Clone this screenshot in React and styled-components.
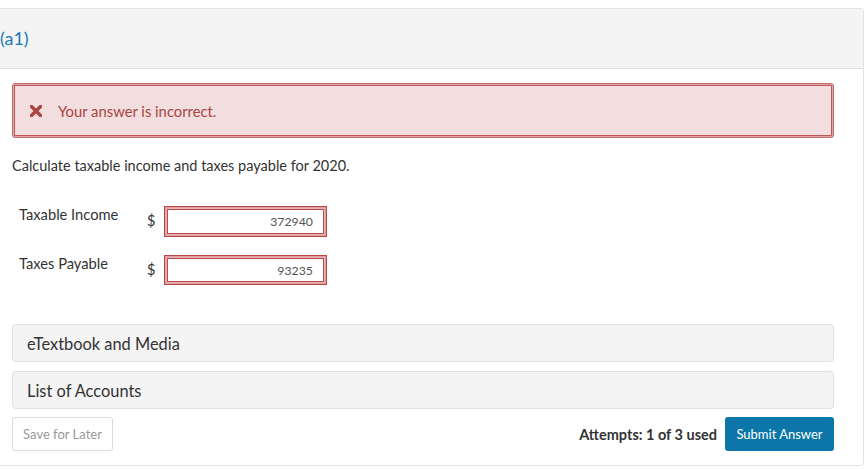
import React from "react";
import styled, { createGlobalStyle } from "styled-components";

const Global = createGlobalStyle`
  html, body { margin: 0; padding: 0; background: #fff; }
  body { font-family: Lato, "Open Sans", Arial, sans-serif; color: #333; }
  * { box-sizing: border-box; }
`;

const Page = styled.div`
  padding-top: 8px;
  width: 868px;
  height: 469px;
  overflow: hidden;
`;

const Card = styled.div`
  margin-left: -1px;
  width: 865px;
  border: 1px solid #e3e3e3;
  border-radius: 0 3px 3px 0;
  background: #fff;
`;

const Header = styled.div`
  height: 60px;
  background: #f4f4f4;
  border-bottom: 1px solid #dedede;
  display: flex;
  align-items: center;
  padding-left: 0;
  padding-bottom: 1px;
  font-size: 18px;
  color: #1a7ab5;
`;

const Body = styled.div`
  padding: 14px 29px 14px 12px;
`;

const Alert = styled.div`
  height: 55px;
  border: 1px solid #c46a6a;
  border-radius: 3px;
  box-shadow: inset 0 0 0 1px #e3a7a7, inset 0 0 0 2px #bb5656;
  background: #f2dede;
  color: #a94442;
  display: flex;
  align-items: center;
  padding-left: 17px;
  font-size: 14.8px;
  gap: 16px;
`;

const Instruction = styled.p`
  margin: 18px 0 0;
  font-size: 14.5px;
  line-height: 20px;
  color: #333;
`;

const Fields = styled.div`
  margin-top: 30px;
  display: flex;
  flex-direction: column;
  gap: 19px;
`;

const FieldRow = styled.div`
  display: flex;
  align-items: flex-start;
  height: 30px;
`;

const FieldLabel = styled.div`
  width: 135px;
  padding-left: 7px;
  padding-top: 1px;
  font-size: 14.7px;
  line-height: 14px;
  color: #333;
`;

const Dollar = styled.span`
  width: 17px;
  font-size: 14.5px;
  line-height: 30px;
  color: #333;
`;

const Input = styled.div`
  width: 163px;
  height: ${(p) => p.$h}px;
  border: 1px solid #b84848;
  box-shadow: inset 0 0 0 1px #dca0a0, inset 0 0 0 2px #e6b3b3, inset 0 0 0 3px #b94c4c;
  background: #fff;
  display: flex;
  align-items: center;
  justify-content: flex-end;
  padding-right: 13px;
  font-size: 12.3px;
  color: #555;
`;

const Panels = styled.div`
  margin-top: 39px;
  display: flex;
  flex-direction: column;
  gap: 9px;
`;

const Panel = styled.div`
  height: 38px;
  background: #f4f4f4;
  border: 1px solid #e0e0e0;
  border-radius: 4px;
  display: flex;
  align-items: center;
  padding-left: 14px;
  font-size: 16.4px;
  color: #333;
`;

const Footer = styled.div`
  margin-top: 8px;
  display: flex;
  align-items: center;
  justify-content: space-between;
`;

const GhostButton = styled.button`
  width: 101px;
  height: 34px;
  border: 1px solid #dcdcdc;
  border-radius: 3px;
  background: #fff;
  font-family: inherit;
  font-size: 13px;
  color: #999;
  cursor: pointer;
`;

const Right = styled.div`
  display: flex;
  align-items: center;
  gap: 8px;
`;

const Attempts = styled.span`
  font-size: 14.5px;
  font-weight: 700;
  color: #333;
`;

const Submit = styled.button`
  width: 109px;
  height: 34px;
  border: none;
  border-radius: 3px;
  background: #0b76a7;
  color: #fff;
  font-family: inherit;
  font-size: 13px;
  cursor: pointer;
`;

const XIcon = () => (
  <svg width="12" height="12" viewBox="0 0 12 12" aria-hidden="true">
    <path d="M1.5 1.5 L10.5 10.5 M10.5 1.5 L1.5 10.5" stroke="#a94442" strokeWidth="3.4" strokeLinecap="square" />
  </svg>
);

export default function App() {
  return (
    <Page>
      <Global />
      <Card>
        <Header>(a1)</Header>
        <Body>
          <Alert>
            <XIcon />
            <span>Your answer is incorrect.</span>
          </Alert>
          <Instruction>Calculate taxable income and taxes payable for 2020.</Instruction>
          <Fields>
            <FieldRow>
              <FieldLabel>Taxable Income</FieldLabel>
              <Dollar>$</Dollar>
              <Input $h={31}>372940</Input>
            </FieldRow>
            <FieldRow>
              <FieldLabel>Taxes Payable</FieldLabel>
              <Dollar>$</Dollar>
              <Input $h={30}>93235</Input>
            </FieldRow>
          </Fields>
          <Panels>
            <Panel>eTextbook and Media</Panel>
            <Panel>List of Accounts</Panel>
          </Panels>
          <Footer>
            <GhostButton>Save for Later</GhostButton>
            <Right>
              <Attempts>Attempts: 1 of 3 used</Attempts>
              <Submit>Submit Answer</Submit>
            </Right>
          </Footer>
        </Body>
      </Card>
    </Page>
  );
}
